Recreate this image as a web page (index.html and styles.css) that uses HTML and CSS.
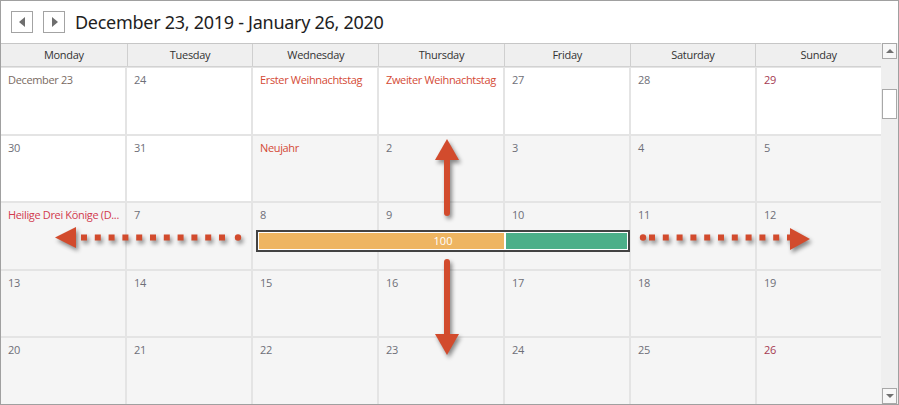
FILE: index.html
```html
<!DOCTYPE html>
<html>
<head>
<meta charset="utf-8">
<link rel="stylesheet" href="styles.css">
</head>
<body>
<div class="frame">
  <div class="toolbar">
    <button class="nav-btn"><span class="tri tri-left"></span></button>
    <button class="nav-btn"><span class="tri tri-right"></span></button>
    <div class="title">December 23, 2019 - January 26, 2020</div>
  </div>
  <div class="main">
    <div class="calendar">
      <div class="days">
        <div class="day">Monday</div>
        <div class="day">Tuesday</div>
        <div class="day">Wednesday</div>
        <div class="day">Thursday</div>
        <div class="day">Friday</div>
        <div class="day">Saturday</div>
        <div class="day">Sunday</div>
      </div>
      <div class="weeks">
        <div class="cell cur"><span class="num first">December 23</span></div>
        <div class="cell cur"><span class="num">24</span></div>
        <div class="cell cur"><span class="num holiday">Erster Weihnachtstag</span></div>
        <div class="cell cur"><span class="num holiday">Zweiter Weihnachtstag</span></div>
        <div class="cell cur"><span class="num">27</span></div>
        <div class="cell cur"><span class="num">28</span></div>
        <div class="cell cur"><span class="num sun">29</span></div>

        <div class="cell cur"><span class="num">30</span></div>
        <div class="cell cur"><span class="num">31</span></div>
        <div class="cell"><span class="num holiday">Neujahr</span></div>
        <div class="cell"><span class="num">2</span></div>
        <div class="cell"><span class="num">3</span></div>
        <div class="cell"><span class="num">4</span></div>
        <div class="cell"><span class="num">5</span></div>

        <div class="cell"><span class="num holiday2">Heilige Drei Könige (D...</span></div>
        <div class="cell"><span class="num">7</span></div>
        <div class="cell"><span class="num">8</span></div>
        <div class="cell"><span class="num">9</span></div>
        <div class="cell"><span class="num">10</span></div>
        <div class="cell"><span class="num">11</span></div>
        <div class="cell"><span class="num">12</span></div>

        <div class="cell"><span class="num">13</span></div>
        <div class="cell"><span class="num">14</span></div>
        <div class="cell"><span class="num">15</span></div>
        <div class="cell"><span class="num">16</span></div>
        <div class="cell"><span class="num">17</span></div>
        <div class="cell"><span class="num">18</span></div>
        <div class="cell"><span class="num">19</span></div>

        <div class="cell"><span class="num">20</span></div>
        <div class="cell"><span class="num">21</span></div>
        <div class="cell"><span class="num">22</span></div>
        <div class="cell"><span class="num">23</span></div>
        <div class="cell"><span class="num">24</span></div>
        <div class="cell"><span class="num">25</span></div>
        <div class="cell"><span class="num sun">26</span></div>
      </div>
    </div>
    <div class="scrollbar">
      <div class="sb-btn"><span class="tri tri-up"></span></div>
      <div class="sb-track"><div class="sb-thumb"></div></div>
      <div class="sb-btn"><span class="tri tri-down"></span></div>
    </div>
  </div>

  <div class="appt">
    <div class="appt-inner">
      <div class="appt-orange"></div>
      <div class="appt-green"></div>
      <span class="appt-text">100</span>
    </div>
  </div>

  <svg class="arrows" width="899" height="405" viewBox="0 0 899 405">
    <g class="shadowed" fill="#d24b2d" stroke="none">
      <rect x="444" y="155" width="6" height="61" rx="3"/>
      <polygon points="435,160 459,160 447,139"/>
      <rect x="444" y="259" width="6" height="80" rx="3"/>
      <polygon points="435,334 459,334 447,355"/>
      <polygon points="76,227 76,248 55,237.5"/>
      <line x1="81" y1="237.5" x2="231" y2="237.5" stroke="#d24b2d" stroke-width="6" stroke-dasharray="6 7.8"/>
      <circle cx="238" cy="237.5" r="3.2"/>
      <circle cx="643" cy="237.5" r="3.2"/>
      <line x1="649" y1="237.5" x2="790" y2="237.5" stroke="#d24b2d" stroke-width="6" stroke-dasharray="6 7.8"/>
      <polygon points="790,228 790,250 810,239"/>
    </g>
  </svg>
</div>
</body>
</html>
```

FILE: styles.css
```css
* { box-sizing: border-box; }
html, body { margin: 0; padding: 0; background: #fff; }
body { font-family: "Open Sans", "Noto Sans", sans-serif; }

.frame {
  position: relative;
  width: 899px;
  height: 405px;
  border: 1px solid #a0a0a0;
  display: flex;
  flex-direction: column;
  overflow: hidden;
}

.toolbar {
  height: 42px;
  display: flex;
  align-items: center;
  padding-left: 10px;
  gap: 10px;
  flex: none;
}
.nav-btn {
  width: 22px;
  height: 22px;
  border: 1px solid #a3a3a3;
  background: #fff;
  padding: 0;
  margin: 0;
  display: flex;
  align-items: center;
  justify-content: center;
}
.title {
  font-family: "Noto Sans", "Open Sans", sans-serif;
  font-size: 18px;
  color: #1e1e1e;
  line-height: 22px;
  letter-spacing: -0.28px;
}

.tri { display: block; width: 0; height: 0; }
.tri-left { border-top: 5px solid transparent; border-bottom: 5px solid transparent; border-right: 6px solid #6e6e6e; margin-left: -1px; }
.tri-right { border-top: 5px solid transparent; border-bottom: 5px solid transparent; border-left: 6px solid #6e6e6e; margin-left: 1px; }
.tri-up { border-left: 4px solid transparent; border-right: 4px solid transparent; border-bottom: 4px solid #707070; }
.tri-down { border-left: 4px solid transparent; border-right: 4px solid transparent; border-top: 4px solid #707070; }

.main {
  flex: 1;
  display: flex;
  min-height: 0;
}
.calendar {
  width: 880px;
  display: flex;
  flex-direction: column;
  border-top: 1px solid #c6c6c6;
}
.days {
  height: 23px;
  display: grid;
  grid-template-columns: repeat(7, 1fr);
  background: #efefef;
  border-bottom: 1px solid #d2d2d2;
  flex: none;
}
.day {
  font-size: 11px;
  letter-spacing: -0.3px;
  color: #333;
  text-align: center;
  line-height: 22px;
  border-left: 1px solid #cfcfcf;
}
.day:first-child { border-left: none; }

.weeks {
  flex: 1;
  display: grid;
  grid-template-columns: repeat(7, 1fr);
  grid-template-rows: repeat(5, 1fr);
  gap: 2px;
  background: #e4e4e4;
  padding-top: 1px;
}
.cell {
  background: #f5f5f5;
  padding: 4px 7px;
  font-size: 11px;
  letter-spacing: -0.35px;
  line-height: 16px;
  overflow: hidden;
  white-space: nowrap;
}
.cell.cur { background: #fff; }
.num { color: #6e6f78; }
.num.first { color: #7a6b63; }
.num.holiday { color: #d44a35; }
.num.holiday2 { color: #d23a4e; }
.num.sun { color: #a53a52; }

.scrollbar {
  width: 17px;
  background: #efefef;
  display: flex;
  flex-direction: column;
  padding: 0 1px;
}
.sb-btn {
  height: 16px;
  border: 1px solid #a8a8a8;
  background: #f7f7f7;
  display: flex;
  align-items: center;
  justify-content: center;
  flex: none;
}
.sb-track { flex: 1; padding-top: 30px; }
.sb-thumb {
  height: 30px;
  border: 1px solid #a8a8a8;
  background: #fff;
}

.appt {
  position: absolute;
  left: 255px;
  top: 229px;
  width: 374px;
  height: 22px;
  border: 2px solid #434343;
  background: #fff;
  padding: 1px;
}
.appt-inner {
  position: relative;
  height: 100%;
  display: flex;
  gap: 2px;
}
.appt-orange { width: 245px; background: #eeb561; }
.appt-green { flex: 1; background: #4caf89; }
.appt-text {
  position: absolute;
  left: 0; right: 0; top: 0;
  text-align: center;
  color: #fff;
  font-size: 11px;
  line-height: 16px;
}

.arrows {
  position: absolute;
  left: -1px;
  top: -1px;
  pointer-events: none;
}
.shadowed { filter: drop-shadow(2px 3px 2px rgba(0,0,0,0.45)); }
```
